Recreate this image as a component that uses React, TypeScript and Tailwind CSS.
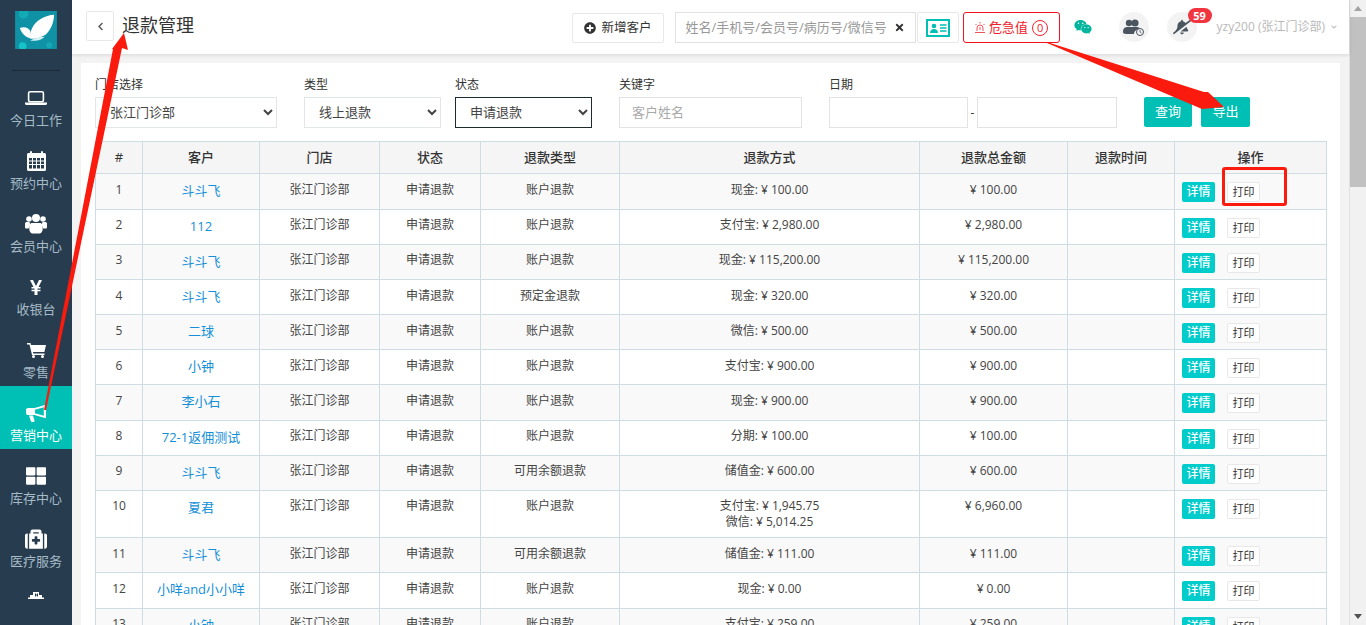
import React from "react";
import { FaThLarge, FaMedkit, FaPlusCircle, FaWeixin, FaBellSlash, FaTimes, FaChevronLeft, FaChevronDown } from "react-icons/fa";

function LaptopIcon() {
  return (
    <svg width="22" height="14" viewBox="0 0 22 14" fill="none">
      <rect x="3.600" y="0.800" width="14.800" height="10" rx="1.500" stroke="#fff" strokeWidth="1.600" />
      <path d="M0 11.500h22v1c0 .8-.6 1.500-1.500 1.500h-19C.6 14 0 13.300 0 12.500z" fill="#fff" />
    </svg>
  );
}
function CalendarIcon() {
  return (
    <svg width="19" height="20" viewBox="0 0 19 20">
      <path fillRule="evenodd" fill="#fff" d="M1.500 2H3V1a1 1 0 0 1 2 0v1h9V1a1 1 0 0 1 2 0v1h1.500A1.500 1.500 0 0 1 19 3.500v15a1.500 1.500 0 0 1-1.500 1.500h-16A1.500 1.500 0 0 1 0 18.500v-15A1.500 1.500 0 0 1 1.500 2zM2 7v2.500h3V7zm4 0v2.500h3V7zm4 0v2.500h3V7zm4 0v2.500h3V7zM2 10.500V13h3v-2.500zm4 0V13h3v-2.500zm4 0V13h3v-2.500zm4 0V13h3v-2.500zM2 14v3.500h3V14zm4 0v3.500h3V14zm4 0v3.500h3V14zm4 0v3.500h3V14z" />
    </svg>
  );
}
function UsersIcon() {
  return (
    <svg width="22" height="20" viewBox="0 0 22 20" fill="#fff">
      <circle cx="4" cy="5" r="2.800" />
      <circle cx="18" cy="5" r="2.800" />
      <circle cx="11" cy="4" r="4" />
      <path d="M0 9.500C0 8.500 1 8 2 8h2.500c.2 1.200 1 2.300 1.800 3-1.300.8-2.300 2-2.600 3.500H1.500C.5 14.500 0 14 0 13zM22 9.500C22 8.500 21 8 20 8h-2.500c-.2 1.200-1 2.300-1.800 3 1.300.8 2.300 2 2.600 3.500h2.200c1 0 1.500-.5 1.500-1.500z" />
      <path d="M7 9h8c2 0 2.700 2.500 2.700 5.500 0 2.500-.7 4-2.700 5H7c-2-1-2.700-2.500-2.700-5C4.300 11.500 5 9 7 9z" />
    </svg>
  );
}
function YenIcon() {
  return (
    <svg width="12" height="15" viewBox="0 0 12 15" fill="#fff">
      <path d="M0 0h3l3 6 3-6h3L8.500 7H10.500v1.500H7.500V9.800h3v1.500h-3V15h-3v-3.700h-3V9.800h3V8.500h-3V7H3.500z" />
    </svg>
  );
}
function CartIcon() {
  return (
    <svg width="19" height="15" viewBox="0 0 19 15" fill="#fff">
      <path d="M0 0h3.500l.5 2h15l-1.600 7H6l.3 1.500h11.200V12H5L2.500 1.500H0z" />
      <circle cx="6.500" cy="13.500" r="1.500" />
      <circle cx="15.500" cy="13.500" r="1.500" />
    </svg>
  );
}
function HornIcon() {
  return (
    <svg width="20" height="17" viewBox="0 0 20 17" fill="#fff">
      <path fillRule="evenodd" d="M19 0h1v13h-1L8.500 10H2a2 2 0 0 1-2-2V5a2 2 0 0 1 2-2h6.500zM17.800 2.300 9 4.800v3.500l8.800 2.500z" />
      <path d="M3 10.500h4l1.500 5c.2.800-.3 1.500-1 1.500H6c-.6 0-1-.4-1.200-1z" />
    </svg>
  );
}

const navItems = [
  { label: "今日工作", icon: <LaptopIcon /> },
  { label: "预约中心", icon: <CalendarIcon /> },
  { label: "会员中心", icon: <UsersIcon /> },
  { label: "收银台", icon: <YenIcon /> },
  { label: "零售", icon: <CartIcon /> },
  { label: "营销中心", icon: <HornIcon />, active: true },
  { label: "库存中心", icon: <FaThLarge size={20} /> },
  { label: "医疗服务", icon: <FaMedkit size={22} /> },
];

const rows = [
  { n: 1, c: "斗斗飞", t: "账户退款", m: ["现金: ¥ 100.00"], a: "¥ 100.00", h: "h-[36px]", p: "pt-[8px]" },
  { n: 2, c: "112", t: "账户退款", m: ["支付宝: ¥ 2,980.00"], a: "¥ 2,980.00", h: "h-[35px]", p: "pt-[7px]" },
  { n: 3, c: "斗斗飞", t: "账户退款", m: ["现金: ¥ 115,200.00"], a: "¥ 115,200.00", h: "h-[35px]", p: "pt-[7px]" },
  { n: 4, c: "斗斗飞", t: "预定金退款", m: ["现金: ¥ 320.00"], a: "¥ 320.00", h: "h-[35px]", p: "pt-[8px]" },
  { n: 5, c: "二球", t: "账户退款", m: ["微信: ¥ 500.00"], a: "¥ 500.00", h: "h-[35px]", p: "pt-[8px]" },
  { n: 6, c: "小钟", t: "账户退款", m: ["支付宝: ¥ 900.00"], a: "¥ 900.00", h: "h-[35px]", p: "pt-[8px]" },
  { n: 7, c: "李小石", t: "账户退款", m: ["现金: ¥ 900.00"], a: "¥ 900.00", h: "h-[36px]", p: "pt-[8px]" },
  { n: 8, c: "72-1返佣测试", t: "账户退款", m: ["分期: ¥ 100.00"], a: "¥ 100.00", h: "h-[35px]", p: "pt-[7px]" },
  { n: 9, c: "斗斗飞", t: "可用余额退款", m: ["储值金: ¥ 600.00"], a: "¥ 600.00", h: "h-[35px]", p: "pt-[7px]" },
  { n: 10, c: "夏君", t: "账户退款", m: ["支付宝: ¥ 1,945.75", "微信: ¥ 5,014.25"], a: "¥ 6,960.00", h: "h-[47px]", p: "pt-[7px]" },
  { n: 11, c: "斗斗飞", t: "可用余额退款", m: ["储值金: ¥ 111.00"], a: "¥ 111.00", h: "h-[35px]", p: "pt-[8px]" },
  { n: 12, c: "小咩and小小咩", t: "账户退款", m: ["现金: ¥ 0.00"], a: "¥ 0.00", h: "h-[36px]", p: "pt-[8px]" },
  { n: 13, c: "小钟", t: "账户退款", m: ["支付宝: ¥ 259.00"], a: "¥ 259.00", h: "h-[35px]", p: "pt-[7px]" },
];

const heads = ["#", "客户", "门店", "状态", "退款类型", "退款方式", "退款总金额", "退款时间", "操作"];
const widths = ["w-[47px]", "w-[117px]", "w-[120px]", "w-[101px]", "w-[139px]", "w-[300px]", "w-[148px]", "w-[107px]", "w-[152px]"];
const td = "border border-[#cddde2] px-1 pb-0 align-top text-center leading-[16px] text-[12px] text-[#444]";

function Logo() {
  return (
    <svg width="44" height="40" viewBox="0 0 44 40">
      <rect width="44" height="40" fill="#1092a6" />
      <circle cx="9" cy="3" r="5" fill="#12aab4" />
      <circle cx="36" cy="36" r="3" fill="#14a9b4" />
      <circle cx="8" cy="37" r="4" fill="#14c4c8" />
      <path d="M16 29C15 22 19 13 26 9C31 6 37 4 41 4C41 11 38 20 32 25C27 28 21 30 16 29Z" fill="#fff" />
      <path d="M5 18C9 16 14 17 16 21L17 29C11 28 7 24 5 18Z" fill="#fff" />
      <path d="M16 31C21 28 27 27 31 27C29 30 22 32 16 31Z" fill="#d5f0f2" />
    </svg>
  );
}

function Sidebar() {
  return (
    <aside className="w-[72px] shrink-0 h-full bg-[#273c4e] overflow-hidden flex flex-col">
      <div className="h-[71px] shrink-0 flex flex-col items-center pt-[11px]">
        <Logo />
        <div className="w-[48px] h-px shrink-0 bg-[#1b2a37] mt-[21px]" />
      </div>
      {navItems.map(({ label, icon, active }) => (
        <div key={label} className={`h-[63px] shrink-0 flex flex-col items-center ${active ? "bg-[#00bfb4] text-white" : "text-[#a5bbc8]"}`}>
          <div className="h-[40px] mt-[7px] flex items-center justify-center text-white">{icon}</div>
          <span className="text-[13px] leading-[17px] mt-[-6px]">{label}</span>
        </div>
      ))}
      <div className="flex justify-center pt-[16px]">
        <svg width="16" height="8" viewBox="0 0 16 8" fill="#fff">
          <path d="M0 6.500h2V4h3V1h6v3h3v2.500h2V8H0zM7 2.500v3h1v-1h1v1h1v-3H9v1H8v-1z" />
        </svg>
      </div>
    </aside>
  );
}

function Header() {
  return (
    <header className="h-[54px] shrink-0 bg-white shadow-[0_1px_4px_rgba(0,0,0,0.12)] relative flex items-start pl-[14px] pr-[12px]">
      <button className="mt-[11px] w-[28px] h-[30px] border border-[#e8e8e8] rounded-[2px] flex items-center justify-center text-[#555]">
        <FaChevronLeft size={9} />
      </button>
      <h1 className="ml-[8px] mt-[13px] text-[18px] leading-[24px] font-normal text-[#333]">退款管理</h1>
      <div className="flex-1" />
      <button className="mt-[13px] w-[92px] h-[30px] border border-[#e8e8e8] rounded-[2px] flex items-center justify-center gap-[6px] text-[12.500px] text-[#333]">
        <FaPlusCircle size={12} />
        新增客户
      </button>
      <div className="mt-[12px] ml-[11px] w-[241px] h-[31px] border border-[#e2e2e2] flex items-center pl-[10px] pr-[10px] justify-between text-[13px] text-[#999]">
        <span>姓名/手机号/会员号/病历号/微信号</span>
        <FaTimes size={11} className="text-[#333]" />
      </div>
      <button className="mt-[12px] ml-px w-[42px] h-[31px] border border-[#e8e8e8] rounded-[2px] flex items-center justify-center">
        <svg width="24" height="18" viewBox="0 0 24 18">
          <rect x="1" y="1" width="22" height="16" fill="#fff" stroke="#00bfb4" strokeWidth="2" />
          <circle cx="8" cy="7" r="2.300" fill="#00bfb4" />
          <path d="M4 14c0-3 2-4 4-4s4 1 4 4z" fill="#00bfb4" />
          <path d="M14 6h6.500M14 9h6.500M14 12h6.500" stroke="#00bfb4" strokeWidth="1.300" />
        </svg>
      </button>
      <div className="mt-[12px] ml-[4px] w-[97px] h-[31px] border border-[#f0131e] rounded-[3px] flex items-center justify-center gap-[3px] text-[13px] text-[#f0232d]">
        <svg width="12" height="13" viewBox="0 0 12 13" fill="none" stroke="#f0525a" strokeWidth="1">
          <path d="M3 10V7a3 3 0 0 1 6 0v3M1 11.500h10M6 1v1.500M1.500 3l1 1M10.500 3l-1 1M6 6v3" />
        </svg>
        <span>危急值</span>
        <span className="ml-[1px] w-[16px] h-[16px] rounded-full border border-[#f0232d] flex items-center justify-center text-[11px] leading-none">0</span>
      </div>
      <div className="mt-[18px] ml-[14px] text-[#00b59c]"><FaWeixin size={18} /></div>
      <div className="mt-[12px] ml-[27px] w-[30px] h-[30px] rounded-full bg-[#f3f3f3] flex items-center justify-center">
        <svg width="22" height="17" viewBox="0 0 22 17" fill="#4a5560">
          <circle cx="6" cy="4" r="3.200" />
          <circle cx="12" cy="4" r="3.600" />
          <path d="M0 13c0-4 2-5 5-5h9c2 0 3 1 3 2-3 0-6 2-6 5H3c-2 0-3-1-3-2z" />
          <circle cx="17" cy="13" r="3.500" fill="#f3f3f3" stroke="#4a5560" />
          <path d="M17 11v2l1.500 1" fill="none" stroke="#4a5560" strokeWidth="0.800" />
        </svg>
      </div>
      <div className="mt-[12px] ml-[18px] w-[30px] h-[30px] rounded-full bg-[#f3f3f3] flex items-center justify-center text-[#4a5560] relative">
        <FaBellSlash size={18} className="-scale-x-100" />
        <span className="absolute left-[21px] top-[-4px] w-[24px] h-[15px] rounded-full bg-[#f0353f] text-white text-[11px] leading-[15px] font-bold text-center">59</span>
      </div>
      <div className="mt-[18px] ml-[20px] flex items-center gap-[6px] text-[12px] leading-[18px] text-[#b8b8b8] whitespace-nowrap">
        <span>yzy200 (张江门诊部)</span>
        <FaChevronDown size={6} />
      </div>
    </header>
  );
}

function Field({ label, className, children }: { label: string; className: string; children: React.ReactNode }) {
  return (
    <div className={className}>
      <div className="text-[12px] leading-[16px] text-[#333] mb-[4px]">{label}</div>
      {children}
    </div>
  );
}

function Filters() {
  const sel = "w-full h-[31px] border border-[#e3e6e6] pl-[10px] pb-[2px] text-[13px] text-[#444] bg-white";
  const inp = "h-[31px] border border-[#e3e3e3] bg-white";
  return (
    <div className="flex items-start">
      <Field label="门店选择" className="w-[182px]">
        <select className={sel}><option>张江门诊部</option></select>
      </Field>
      <Field label="类型" className="w-[137px] ml-[27px]">
        <select className={sel}><option>线上退款</option></select>
      </Field>
      <Field label="状态" className="w-[137px] ml-[14px]">
        <select className="w-full h-[31px] border border-[#1c2b2b] pl-[10px] pb-[2px] text-[13px] text-[#444] bg-white"><option>申请退款</option></select>
      </Field>
      <Field label="关键字" className="w-[183px] ml-[27px]">
        <div className={`${inp} w-full flex items-center pl-[12px] text-[13px] text-[#aaa]`}>客户姓名</div>
      </Field>
      <Field label="日期" className="ml-[27px]">
        <div className="flex items-center">
          <div className={`${inp} w-[139px]`} />
          <span className="w-[9px] text-[12px] text-center text-[#333]">-</span>
          <div className={`${inp} w-[140px]`} />
        </div>
      </Field>
      <button className="mt-[20px] ml-[27px] w-[48px] h-[30px] rounded-[2px] bg-[#00bfb4] text-white text-[13px]">查询</button>
      <button className="mt-[20px] ml-[9px] w-[49px] h-[30px] rounded-[2px] bg-[#00bfb4] text-white text-[13px]">导出</button>
    </div>
  );
}

function RefundTable() {
  return (
    <table className="mt-[13px] w-[1231px] table-fixed border-collapse">
      <colgroup>
        {widths.map((w, i) => <col key={i} className={w} />)}
      </colgroup>
      <thead>
        <tr className="h-[32px] bg-[#f5f5f5]">
          {heads.map((h) => (
            <th key={h} className="border border-[#cddde2] text-[13px] font-medium text-[#333]">{h}</th>
          ))}
        </tr>
      </thead>
      <tbody>
        {rows.map((r) => (
          <tr key={r.n} className={`${r.h} ${r.n % 2 ? "bg-[#f9f9f9]" : "bg-white"}`}>
            <td className={`${td} ${r.p}`}>{r.n}</td>
            <td className={`${td} !text-[13px] !text-[#1590d8] pt-[8px]`}>{r.c}</td>
            <td className={`${td} ${r.p}`}>张江门诊部</td>
            <td className={`${td} ${r.p}`}>申请退款</td>
            <td className={`${td} ${r.p}`}>{r.t}</td>
            <td className={`${td} ${r.p}`}>{r.m.map((x) => <div key={x}>{x}</div>)}</td>
            <td className={`${td} ${r.p}`}>{r.a}</td>
            <td className={td} />
            <td className="border border-[#cddde2] align-top pt-[8px] pl-[7px]">
              <div className="flex items-start gap-[12px]">
                <span className="w-[33px] h-[20px] rounded-[2px] bg-[#00cccc] text-white text-[12px] font-medium leading-[20px] text-center">详情</span>
                <span className="w-[33px] h-[20px] rounded-[2px] border border-[#e8e8e8] bg-white text-[#333] text-[11px] leading-[18px] text-center">打印</span>
              </div>
            </td>
          </tr>
        ))}
      </tbody>
    </table>
  );
}

function Scrollbar() {
  return (
    <div className="w-[17px] shrink-0 h-full bg-[#f1f1f1] border-l border-[#e0e0e0] flex flex-col items-center">
      <div className="h-[17px] w-full flex items-center justify-center">
        <div className="w-0 h-0 border-x-[4px] border-x-transparent border-b-[5px] border-b-[#a3a3a3]" />
      </div>
      <div className="w-full h-[170px] bg-[#c1c1c1]" />
      <div className="flex-1" />
      <div className="h-[17px] w-full flex items-center justify-center">
        <div className="w-0 h-0 border-x-[4px] border-x-transparent border-t-[5px] border-t-[#505050]" />
      </div>
    </div>
  );
}

function Annotations() {
  return (
    <>
      <svg className="absolute inset-0 pointer-events-none" width="1366" height="625" viewBox="0 0 1366 625">
        <polygon fill="#fb1a0e" points="44,410 113,49 112,49 124,33 128,50 122,48 46,410" />
        <polygon fill="#fb1a0e" points="1047,42 1204,92 1208,92 1224,107 1202,109 1047,43" />
      </svg>
      <div className="absolute left-[1222px] top-[167px] w-[65px] h-[39px] border-[3px] border-[#fb1a0e] rounded-[3px] pointer-events-none" />
    </>
  );
}

export default function App() {
  return (
    <div className="relative w-[1366px] h-[625px] overflow-hidden flex bg-[#f3f3f3] font-['Open_Sans','Noto_Sans_CJK_SC',sans-serif]">
      <Sidebar />
      <div className="flex-1 min-w-0 h-full flex flex-col">
        <Header />
        <main className="flex-1 min-h-0 overflow-hidden pl-[9px] pr-[9px] pt-[9px]">
          <div className="bg-white h-full pl-[14px] pr-[13px] pt-[14px]">
            <Filters />
            <RefundTable />
          </div>
        </main>
      </div>
      <Scrollbar />
      <Annotations />
    </div>
  );
}
